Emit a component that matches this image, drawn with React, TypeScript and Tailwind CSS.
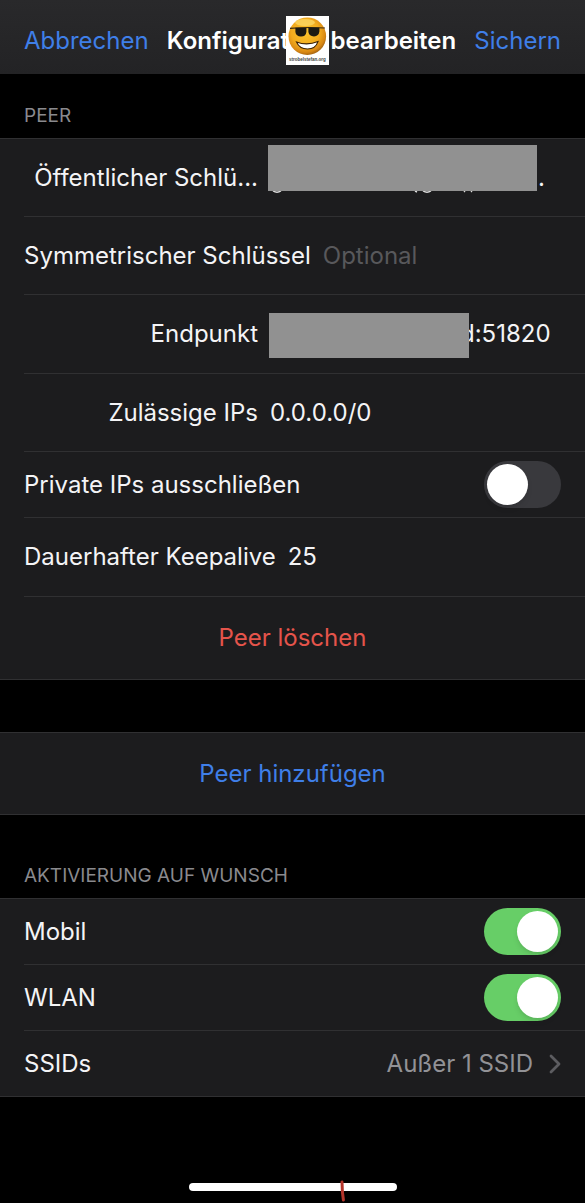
import React, { useState } from "react";

const LINE = "border-[#303032]";

interface SectionProps {
  title?: string;
  children: React.ReactNode;
}

const Section = ({ title, children }: SectionProps) => {
  return (
    <section>
      {title && (
        <h2 className="px-6 pb-2 text-[19px] leading-7 text-[#8a8a8e]">
          {title}
        </h2>
      )}
      <div className={`border-y bg-[#1c1c1e] ${LINE}`}>{children}</div>
    </section>
  );
};

interface FieldRowProps {
  id: string;
  label: string;
  defaultValue?: string;
  placeholder?: string;
  rowClass?: string;
  inputClass?: string;
  children?: React.ReactNode;
}

const FieldRow = ({
  id,
  label,
  defaultValue,
  placeholder,
  rowClass = "h-[78px]",
  inputClass = "",
  children,
}: FieldRowProps) => {
  return (
    <div className={`ml-6 flex items-center gap-3 border-b ${rowClass} ${LINE}`}>
      <label htmlFor={id} className="min-w-[234px] shrink-0 text-right">
        {label}
      </label>
      <div className="relative flex min-w-0 flex-1 items-center">
        <input
          id={id}
          defaultValue={defaultValue}
          placeholder={placeholder}
          className={`w-full min-w-0 bg-transparent outline-none placeholder:text-[#58585b] ${inputClass}`}
        />
        {children}
      </div>
    </div>
  );
};

interface SwitchRowProps {
  id: string;
  label: string;
  initial?: boolean;
}

const SwitchRow = ({ id, label, initial = false }: SwitchRowProps) => {
  const [on, setOn] = useState(initial);

  return (
    <div
      className={`ml-6 flex h-[66px] items-center justify-between border-b pr-6 ${LINE}`}
    >
      <label htmlFor={id}>{label}</label>
      <input
        id={id}
        type="checkbox"
        role="switch"
        checked={on}
        onChange={(e) => setOn(e.target.checked)}
        className="flex h-[47px] w-[77px] shrink-0 cursor-pointer appearance-none items-center rounded-full bg-[#39393d] px-[3px] before:size-[41px] before:rounded-full before:bg-white before:shadow-md checked:justify-end checked:bg-[#67ce67]"
      />
    </div>
  );
};

const Badge = () => (
  <svg
    viewBox="0 0 43 49"
    className="absolute -top-[9px] left-[119px] h-[49px] w-[43px]"
    aria-hidden="true"
  >
    <defs>
      <radialGradient id="face" cx="0.45" cy="0.4" r="0.62">
        <stop offset="0" stopColor="#fcc52c" />
        <stop offset="0.6" stopColor="#f2ab1e" />
        <stop offset="0.85" stopColor="#d98814" />
        <stop offset="1" stopColor="#9c5e12" />
      </radialGradient>
    </defs>
    <rect width="43" height="49" fill="#fff" />
    <circle cx="21.3" cy="20.2" r="18.8" fill="url(#face)" />
    <ellipse cx="19" cy="6.5" rx="10" ry="3.5" fill="#ffe47a" opacity="0.6" />
    <path d="M4 12.4 Q21 10.8 39 12" stroke="#3a2a10" strokeWidth="1.1" fill="none" />
    <path
      d="M9.4 11.8 H20.4 V16 Q19.8 20.6 15 20.6 Q10 20.4 9.4 16Z M22.4 11.6 H33.4 V15.4 Q32.8 20 28 20.4 Q23.2 20.4 22.4 16Z"
      fill="#1c1a12"
    />
    <path
      d="M10.5 26 Q21 30 32 25.6 Q29.5 33 21.5 33 Q13.5 33 10.5 26Z"
      fill="#fff"
      stroke="#3c2205"
      strokeWidth="1.1"
    />
    <text
      x="21.5"
      y="45.2"
      textAnchor="middle"
      fontSize="4.5"
      fontWeight="700"
      fontFamily="Liberation Sans, sans-serif"
      fill="#444"
    >
      strobelstefan.org
    </text>
  </svg>
);

const App = () => {
  return (
    <div className="flex min-h-screen flex-col bg-black font-['Inter',sans-serif] text-[24px] leading-8 text-[#f4f4f6]">
      <header className="flex h-[74px] items-center justify-between bg-linear-to-b from-[#29292b] to-[#232325] px-6 pt-2">
        <button className="cursor-pointer text-[#3f7fe8]">Abbrechen</button>
        <h1 className="relative font-semibold whitespace-nowrap text-white">
          Konfiguration bearbeiten
          <Badge />
        </h1>
        <button className="cursor-pointer text-[#3f7fe8]">Sichern</button>
      </header>

      <main className="flex flex-col pt-7">
        <Section title="PEER">
          <FieldRow
            id="publicKey"
            label="Öffentlicher Schlü..."
            defaultValue="."
            inputClass="pl-[268px]"
          >
            {/* hidden key, only the descenders stick out below */}
            <div className="absolute -top-[17px] -left-[2px] h-[46px] w-[269px] bg-[#919191]" />
            <svg
              viewBox="0 0 269 3"
              className="absolute top-[29px] -left-[2px] h-[3px] w-[269px]"
              fill="none"
              stroke="#dcdcdc"
              strokeWidth="1.4"
              aria-hidden="true"
            >
              <path d="M5 0 Q9 2.4 13 0 M147 0 L149 1 M155 0 Q159 2.4 163 0 M196 0 L197 1 M203 0 L204 1" />
            </svg>
          </FieldRow>
          <FieldRow
            id="presharedKey"
            label="Symmetrischer Schlüssel"
            placeholder="Optional"
          />
          <FieldRow
            id="endpoint"
            label="Endpunkt"
            defaultValue="d:51820"
            rowClass="h-[79px]"
            inputClass="pl-[190px]"
          >
            <div className="absolute -top-[5px] -left-px h-[45px] w-[200px] bg-[#919191]" />
          </FieldRow>
          <FieldRow id="allowedIps" label="Zulässige IPs" defaultValue="0.0.0.0/0" />
          <SwitchRow id="excludePrivate" label="Private IPs ausschließen" />
          <FieldRow
            id="keepalive"
            label="Dauerhafter Keepalive"
            defaultValue="25"
            rowClass="h-[79px]"
          />
          <button className="h-[82px] w-full cursor-pointer text-[#e5544b]">
            Peer löschen
          </button>
        </Section>

        <div className="pt-[52px] pb-[47px]">
          <Section>
            <button className="h-[81px] w-full cursor-pointer text-[#3f7fe8]">
              Peer hinzufügen
            </button>
          </Section>
        </div>

        <Section title="AKTIVIERUNG AUF WUNSCH">
          <SwitchRow id="mobile" label="Mobil" initial />
          <SwitchRow id="wlan" label="WLAN" initial />
          <button className="flex h-[65px] w-full cursor-pointer items-center px-6">
            <span className="flex-1 text-left">SSIDs</span>
            <span className="text-[#929296]">Außer 1 SSID</span>
            <svg
              viewBox="0 0 12 20"
              className="ml-4 h-5 w-3"
              fill="none"
              stroke="#5c5c60"
              strokeWidth="2.8"
              strokeLinecap="round"
              strokeLinejoin="round"
              aria-hidden="true"
            >
              <path d="M2 2 L10 10 L2 18" />
            </svg>
          </button>
        </Section>
      </main>

      <footer className="mt-auto flex justify-center pb-3">
        <div className="relative h-2 w-[208px] rounded-full bg-white">
          <svg
            viewBox="0 0 6 24"
            className="absolute -top-[3px] left-[151px] h-6 w-[6px]"
            fill="none"
            stroke="#b5352b"
            strokeWidth="3"
            strokeLinecap="round"
            aria-hidden="true"
          >
            <path d="M2 2 L2.4 12 L3.4 20" />
          </svg>
        </div>
      </footer>
    </div>
  );
};

export default App;
